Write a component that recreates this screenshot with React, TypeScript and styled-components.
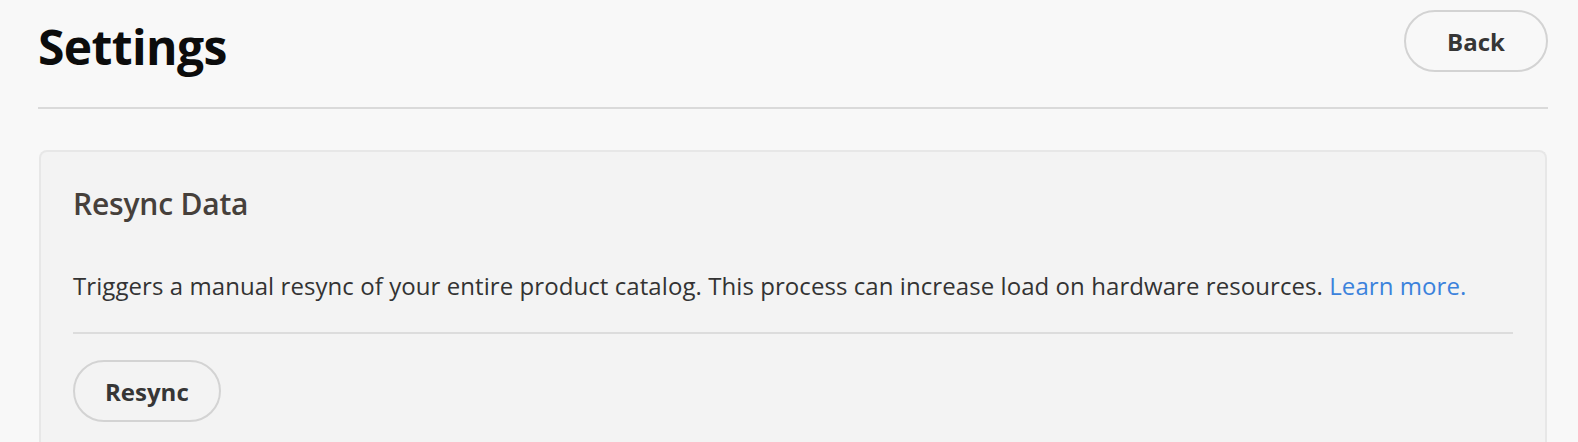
import React from 'react';
import styled, { createGlobalStyle } from 'styled-components';

const Global = createGlobalStyle`
  html, body {
    margin: 0;
    padding: 0;
    background: #f8f8f8;
    font-family: "Open Sans", "Noto Sans", sans-serif;
    color: #2f2f2f;
  }
  * { box-sizing: border-box; }
`

export default () => {
  return (
    <>
      <Global/>
      <Page>
        <Header>
          <Title>Settings</Title>
          <Button wide>Back</Button>
        </Header>
        <Card>
          <Heading>Resync Data</Heading>
          <Body>
            Triggers a manual resync of your entire product catalog. This process can increase load on hardware resources.{' '}
            <Link href="#">Learn more.</Link>
          </Body>
          <Rule/>
          <Button>Resync</Button>
        </Card>
      </Page>
    </>
  )
}

const Page = styled.div`
  padding: 0 30px 0 38px;
  height: 442px;
  overflow: hidden;
`

const Header = styled.div`
  display: flex;
  justify-content: space-between;
  align-items: flex-start;
  height: 109px;
  padding-top: 10px;
  border-bottom: 2px solid #dadada;
`

const Title = styled.h1`
  margin: 7px 0 0 0;
  font-size: 48px;
  line-height: 60px;
  font-weight: 700;
  color: #0c0c0c;
  letter-spacing: -0.6px;
`

const Button = styled.button<{ wide?: boolean }>`
  height: 62px;
  min-width: ${props => props.wide ? '144px' : '0'};
  padding: 0 30px;
  border: 2px solid #d3d3d3;
  border-radius: 31px;
  background: transparent;
  font-family: inherit;
  font-size: 24px;
  font-weight: 700;
  color: #363636;
  cursor: pointer;
`

const Card = styled.div`
  margin: 41px 0 0 1px;
  width: 1508px;
  padding: 34px 32px 0 32px;
  height: 320px;
  background: #f3f3f3;
  border: 2px solid #e7e7e7;
  border-bottom: none;
  border-radius: 8px 8px 0 0;
  display: flex;
  flex-direction: column;
  align-items: flex-start;
`

const Heading = styled.h2`
  margin: 0;
  font-size: 30px;
  line-height: 36px;
  font-weight: 600;
  color: #46403b;
  letter-spacing: -0.2px;
`

const Body = styled.p`
  margin: 48px 0 0 0;
  font-size: 24px;
  line-height: 32px;
  color: #333;
  letter-spacing: 0.07px;
`

const Link = styled.a`
  color: #3b82dc;
  text-decoration: none;
`

const Rule = styled.div`
  align-self: stretch;
  height: 2px;
  margin: 30px 0 26px 0;
  background: #dcdcdc;
`
